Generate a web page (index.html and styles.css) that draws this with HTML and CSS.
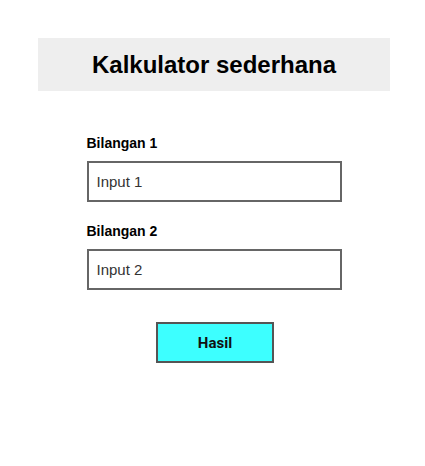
FILE: index.html
```html
<!DOCTYPE html>
<html>
<head>
<meta charset="utf-8">
<link rel="stylesheet" href="styles.css">
</head>
<body>
<div class="wrap">
  <h1 class="title">Kalkulator sederhana</h1>
  <form class="form">
    <label class="label" for="a">Bilangan 1</label>
    <input class="input" id="a" type="text" placeholder="Input 1">
    <label class="label" for="b">Bilangan 2</label>
    <input class="input" id="b" type="text" placeholder="Input 2">
    <div class="actions">
      <button class="btn" type="button">Hasil</button>
    </div>
  </form>
</div>
</body>
</html>
```

FILE: styles.css
```css
html, body {
  margin: 0;
  padding: 0;
  background: #fff;
}
body {
  font-family: "Liberation Sans", Arial, sans-serif;
  color: #000;
}
.wrap {
  width: 352px;
  margin: 38px 0 0 38px;
}
.title {
  margin: 0;
  height: 53px;
  background: #eeeeee;
  font-size: 24px;
  font-weight: bold;
  line-height: 53px;
  text-align: center;
}
.form {
  width: 255px;
  margin: 44px auto 0;
  display: flex;
  flex-direction: column;
}
.label {
  font-size: 14px;
  font-weight: bold;
  line-height: 16px;
  margin-bottom: 10px;
}
.input {
  box-sizing: border-box;
  width: 255px;
  height: 41px;
  border: 2px solid #666;
  padding: 0 8px;
  font-family: "Liberation Sans", Arial, sans-serif;
  font-size: 15px;
  color: #333;
  margin: 0 0 21px;
  outline: none;
}
.input::placeholder {
  color: #333;
}
.actions {
  display: flex;
  justify-content: center;
  margin-top: 11px;
}
.btn {
  box-sizing: border-box;
  width: 118px;
  height: 41px;
  background: #3dffff;
  border: 2px solid #555;
  font-family: Roboto, "Liberation Sans", Arial, sans-serif;
  font-size: 15px;
  font-weight: bold;
  color: #111;
  margin-left: 2px;
}
```
